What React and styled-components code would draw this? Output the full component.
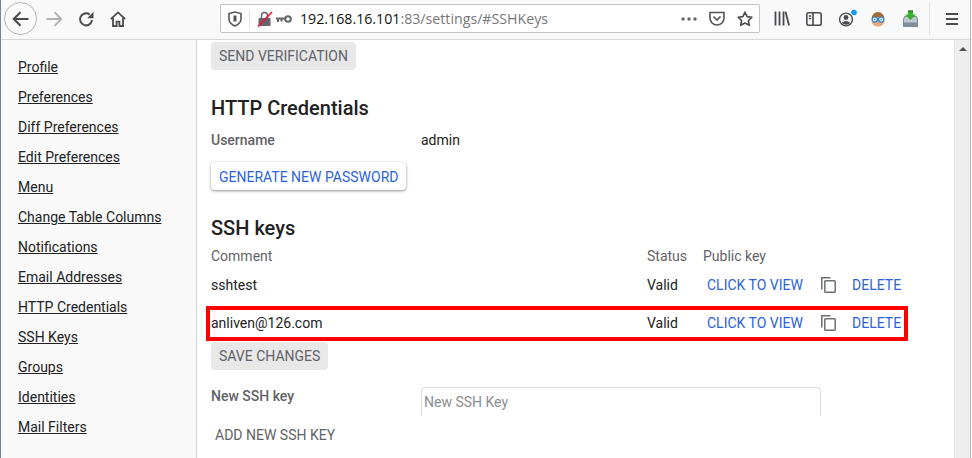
import React from "react";
import styled, { createGlobalStyle } from "styled-components";

const NAV_ITEMS = [
  "Profile",
  "Preferences",
  "Diff Preferences",
  "Edit Preferences",
  "Menu",
  "Change Table Columns",
  "Notifications",
  "Email Addresses",
  "HTTP Credentials",
  "SSH Keys",
  "Groups",
  "Identities",
  "Mail Filters",
];

const KEYS = [
  { comment: "sshtest", status: "Valid" },
  { comment: "anliven@126.com", status: "Valid", marked: true },
];

const GlobalStyle = createGlobalStyle`
  html, body {
    margin: 0;
    height: 458px;
    overflow: hidden;
    background: #fff;
    font-family: Roboto, sans-serif;
    font-size: 14px;
    color: #212121;
  }
`;

const Screen = styled.div`
  width: 972px;
  height: 458px;
  box-sizing: border-box;
  border-left: 1px solid #6f87a3;
  padding-right: 1px;
  overflow: hidden;
`;

const Window = styled.div`
  height: 100%;
  box-sizing: border-box;
  border-right: 1px solid #b4b4b4;
  display: flex;
  flex-direction: column;
`;

const Toolbar = styled.header`
  height: 39px;
  flex: none;
  display: flex;
  align-items: center;
  background: #f9f9fa;
  border-bottom: 1px solid #d8d8da;
  padding-left: 3px;
`;

const BackButton = styled.div`
  width: 33px;
  height: 33px;
  flex: none;
  margin-top: -2px;
  border: 1px solid #b4b4b6;
  border-radius: 50%;
  background: #fbfbfb;
  display: flex;
  align-items: center;
  justify-content: center;
  box-sizing: border-box;
  color: #4a4a4f;
`;

const ToolIcon = styled.div`
  width: ${(p) => p.$w || 32}px;
  height: 32px;
  margin-top: -2px;
  margin-left: ${(p) => p.$left || 0}px;
  display: flex;
  align-items: center;
  justify-content: center;
  flex: none;
  color: ${(p) => p.$color || "#4a4a4f"};
`;

const UrlBar = styled.div`
  width: 540px;
  height: 29px;
  margin-left: 85px;
  margin-top: -2px;
  flex: none;
  box-sizing: border-box;
  background: #fff;
  border: 1px solid #c4c4c6;
  border-radius: 2px;
  display: flex;
  align-items: center;
  padding-left: 3px;
`;

const UrlIcon = styled.div`
  width: ${(p) => p.$w}px;
  flex: none;
  display: flex;
  align-items: center;
  justify-content: center;
`;

const UrlDivider = styled.span`
  width: 1px;
  height: 18px;
  flex: none;
  background: #e3e3e5;
  margin: 0 7px 0 3px;
`;

const UrlText = styled.div`
  font-family: "Open Sans", "Liberation Sans", sans-serif;
  font-size: 14.2px;
  color: #111;
  margin-left: 5px;
  flex: 1;
  white-space: nowrap;
`;

const UrlMuted = styled.span`
  color: #77777b;
`;

const ToolSeparator = styled.span`
  width: 1px;
  height: 33px;
  flex: none;
  background: #e1e1e3;
  margin: -2px 15px 0 3px;
`;

const Page = styled.div`
  flex: 1;
  min-height: 0;
  display: flex;
`;

const Sidebar = styled.nav`
  width: 196px;
  flex: none;
  box-sizing: border-box;
  background: #f9f9fa;
  border-right: 1px solid #d4d4d4;
  padding: 12px 0 0 17px;
  display: flex;
  flex-direction: column;
`;

const NavLink = styled.a`
  height: 30px;
  line-height: 30px;
  font-size: 14px;
  color: #212121;
  text-decoration: underline;
`;

const Content = styled.main`
  flex: 1;
  min-width: 0;
  padding: 2px 0 0 14px;
  display: flex;
  flex-direction: column;
  align-items: flex-start;
`;

const Scrollbar = styled.div`
  width: 16px;
  flex: none;
  background: #eeeeee;
  border-left: 1px solid #e4e4e4;
  box-sizing: border-box;
  display: flex;
  justify-content: center;
  padding-top: 7px;
`;

const ScrollArrow = styled.span`
  width: 0;
  height: 0;
  border-left: 4px solid transparent;
  border-right: 4px solid transparent;
  border-bottom: 4px solid #505050;
`;

const GreyButton = styled.button`
  height: 28px;
  flex: none;
  padding: 0 8px;
  border: 0;
  border-radius: 4px;
  background: #e8e8e8;
  color: #5f6368;
  font-family: Roboto, sans-serif;
  font-size: 14px;
`;

const RaisedButton = styled.button`
  height: 28px;
  flex: none;
  padding: 1px 8px 0;
  border: 0;
  border-radius: 4px;
  background: #fff;
  color: #2b63dc;
  font-family: Roboto, sans-serif;
  font-size: 14px;
  box-shadow: 0 1px 3px rgba(0, 0, 0, 0.45);
`;

const FlatButton = styled.button`
  height: 28px;
  flex: none;
  margin-top: 5px;
  padding: 0 4px;
  border: 0;
  background: transparent;
  color: #5f6368;
  font-family: Roboto, sans-serif;
  font-size: 14px;
`;

const Heading = styled.h2`
  margin: 24px 0 0;
  font-size: 20px;
  font-weight: 500;
  line-height: 28px;
  color: #212121;
`;

const FieldRow = styled.div`
  display: flex;
  align-items: center;
  height: 20px;
  margin: 8px 0 12px;
`;

const FieldLabel = styled.div`
  width: 210px;
  flex: none;
  font-weight: 500;
  color: #5f6368;
`;

const KeyTable = styled.div`
  width: 690px;
  margin-top: 4px;
`;

const KeyGrid = styled.div`
  display: grid;
  grid-template-columns: 436px 56px 118px 31px auto;
  align-items: center;
  white-space: nowrap;
  box-sizing: border-box;
  height: ${(p) => p.$h}px;
`;

const MarkedRow = styled(KeyGrid)`
  position: relative;
  margin: 2px 0 1px;
  padding-bottom: 1px;

  &::after {
    content: "";
    position: absolute;
    left: -5px;
    top: 0;
    width: 702px;
    height: 35px;
    box-sizing: border-box;
    border: 4px solid #fe0000;
    pointer-events: none;
  }
`;

const HeaderCell = styled.div`
  color: #5f6368;
  grid-column: ${(p) => p.$span || "auto"};
`;

const ActionLink = styled.span`
  color: #2b63dc;
  padding-left: ${(p) => p.$pad || 0}px;
`;

const CopyWrap = styled.span`
  display: flex;
  color: #6b6e73;
`;

const NewKeyRow = styled.div`
  display: flex;
  align-items: flex-start;
  height: 29px;
  margin-top: 17px;
`;

const NewKeyLabel = styled(FieldLabel)`
  padding-top: 1px;
`;

const KeyInput = styled.div`
  width: 400px;
  height: 29px;
  box-sizing: border-box;
  border: 1px solid #dcdcdc;
  border-bottom: 0;
  border-radius: 4px 4px 0 0;
  padding: 6px 2px;
  color: #8a8d91;
  font-size: 14px;
`;

const BackIcon = () => (
  <svg width="17" height="16" viewBox="0 0 17 16" fill="none" stroke="currentColor" strokeWidth="2">
    <path d="M16.5 8H2M8.5 1.2L1.7 8l6.8 6.8" />
  </svg>
);

const ForwardIcon = () => (
  <svg width="17" height="16" viewBox="0 0 17 16" fill="none" stroke="currentColor" strokeWidth="1.8">
    <path d="M0.5 8H15M8.5 1.2L15.3 8l-6.8 6.8" />
  </svg>
);

const ReloadIcon = () => (
  <svg width="16" height="16" viewBox="0 0 16 16" fill="none" stroke="currentColor" strokeWidth="2">
    <path d="M14 9a6 6 0 1 1-2.3-5.4" />
    <path d="M15.5 0.8v6.4H9.2z" fill="currentColor" stroke="none" />
  </svg>
);

const HomeIcon = () => (
  <svg width="16" height="16" viewBox="0 0 16 16" fill="none" stroke="currentColor" strokeWidth="1.8">
    <path d="M0.8 8.2L8 1.4l7.2 6.8" />
    <path d="M3 7v8h3.6v-4.4h2.8V15H13V7" />
  </svg>
);

const ShieldIcon = () => (
  <svg width="14" height="16" viewBox="0 0 14 16" fill="none" stroke="#55555a" strokeWidth="1.6">
    <path d="M1 2.5L7 1l6 1.5V8c0 3.2-2.6 5.6-6 7-3.4-1.4-6-3.8-6-7z" />
    <path d="M7 4.5v6" strokeWidth="3" />
  </svg>
);

const LockIcon = () => (
  <svg width="16" height="16" viewBox="0 0 16 16" fill="none">
    <path d="M4.5 7V4.5a3 3 0 0 1 6 0V7" stroke="#66666a" strokeWidth="1.5" />
    <rect x="1.5" y="7" width="12" height="8" rx="1" fill="#66666a" />
    <path d="M1 15.5L15 1" stroke="#f0123c" strokeWidth="1.7" />
  </svg>
);

const KeyIcon = () => (
  <svg width="16" height="10" viewBox="0 0 16 10" fill="none" stroke="#66666a" strokeWidth="2">
    <circle cx="12" cy="5" r="2.8" />
    <path d="M9 4.4H0M2 4.4v3.6M5.5 4.4V7.6" />
  </svg>
);

const MoreIcon = () => (
  <svg width="16" height="4" viewBox="0 0 16 4" fill="#66666a">
    <circle cx="2" cy="2" r="1.7" />
    <circle cx="8" cy="2" r="1.7" />
    <circle cx="14" cy="2" r="1.7" />
  </svg>
);

const PocketIcon = () => (
  <svg width="16" height="15" viewBox="0 0 16 15" fill="none" stroke="#55555a" strokeWidth="1.6">
    <path d="M1 1.5h14V7a7 7 0 0 1-14 0z" />
    <path d="M4.5 5.5L8 9l3.5-3.5" />
  </svg>
);

const StarIcon = () => (
  <svg width="16" height="16" viewBox="0 0 16 16" fill="none" stroke="#4a4a4f" strokeWidth="1.6" strokeLinejoin="round">
    <path d="M8 1.2l2.1 4.4 4.8.6-3.5 3.3.9 4.8L8 12l-4.3 2.3.9-4.8L1.1 6.2l4.8-.6z" />
  </svg>
);

const LibraryIcon = () => (
  <svg width="16" height="15" viewBox="0 0 16 15" fill="none" stroke="currentColor" strokeWidth="1.8">
    <path d="M1.5 0.5v14M5.5 0.5v14M9.5 0.5v14M11.5 0.7l3.6 13.8" />
  </svg>
);

const SidebarIcon = () => (
  <svg width="16" height="14" viewBox="0 0 16 14" fill="none" stroke="currentColor" strokeWidth="1.6">
    <rect x="0.8" y="0.8" width="14.4" height="12.4" rx="2" />
    <path d="M7 1v12M2.8 4h2.4M2.8 6.5h2.4" />
  </svg>
);

const AccountIcon = () => (
  <svg width="20" height="18" viewBox="0 0 20 18" fill="none" overflow="visible">
    <circle cx="10" cy="9.5" r="6.4" stroke="#4a4a4f" strokeWidth="1.4" />
    <circle cx="10" cy="7.5" r="2.4" fill="#4a4a4f" />
    <path d="M5.8 13c1-2.2 7.4-2.2 8.4 0a6 6 0 0 1-8.4 0z" fill="#4a4a4f" />
    <circle cx="18" cy="2.5" r="2.8" fill="#0a9cf5" />
  </svg>
);

const AvatarIcon = () => (
  <svg width="16" height="16" viewBox="0 0 16 16">
    <ellipse cx="8" cy="10" rx="6.5" ry="5.5" fill="#eea878" />
    <path d="M1.5 8a6.5 7 0 0 1 13 0L12 6H4z" fill="#a56a36" />
    <circle cx="4.8" cy="8.6" r="2.6" fill="#e2effb" stroke="#2f80d0" strokeWidth="1.2" />
    <circle cx="11.2" cy="8.6" r="2.6" fill="#e2effb" stroke="#2f80d0" strokeWidth="1.2" />
    <circle cx="4.8" cy="8.6" r="0.8" fill="#5a8fd0" />
    <circle cx="11.2" cy="8.6" r="0.8" fill="#5a8fd0" />
  </svg>
);

const SaveIcon = () => (
  <svg width="15" height="17" viewBox="0 0 15 17">
    <path d="M1.5 6h12l1.5 3v8H0V9z" fill="#7f8e98" />
    <path d="M2 7h11l1 2.5v3H1v-3z" fill="#bcc8cf" />
    <path d="M5 0.5h5v4h3L7.5 10 2 4.5h3z" fill="#35b02a" />
    <path d="M5 0.5h5v1.5H5z" fill="#1f8a1c" />
  </svg>
);

const MenuIcon = () => (
  <svg width="14" height="12" viewBox="0 0 14 12" fill="none" stroke="currentColor" strokeWidth="1.8">
    <path d="M1 1h12M1 6h12M1 11h12" />
  </svg>
);

const CopyIcon = () => (
  <svg width="15" height="16" viewBox="0 0 15 16" fill="none" stroke="currentColor" strokeWidth="1.5">
    <path d="M0.8 12.5V0.8h8.7" />
    <rect x="3.8" y="3.8" width="10.4" height="11.4" rx="0.8" />
  </svg>
);

function App() {
  return (
    <Screen>
      <GlobalStyle />
      <Window>
        <Toolbar>
          <BackButton>
            <BackIcon />
          </BackButton>
          <ToolIcon $w={34} $color="#b1b1b3">
            <ForwardIcon />
          </ToolIcon>
          <ToolIcon $w={30}>
            <ReloadIcon />
          </ToolIcon>
          <ToolIcon $w={34}>
            <HomeIcon />
          </ToolIcon>
          <UrlBar>
            <UrlIcon $w={22}>
              <ShieldIcon />
            </UrlIcon>
            <UrlDivider />
            <LockIcon />
            <UrlIcon $w={22}>
              <KeyIcon />
            </UrlIcon>
            <UrlText>
              192.168.16.101<UrlMuted>:83/settings/#SSHKeys</UrlMuted>
            </UrlText>
            <MoreIcon />
            <UrlIcon $w={40}>
              <PocketIcon />
            </UrlIcon>
            <StarIcon />
            <UrlIcon $w={6} />
          </UrlBar>
          <ToolIcon $left={6}>
            <LibraryIcon />
          </ToolIcon>
          <ToolIcon>
            <SidebarIcon />
          </ToolIcon>
          <ToolIcon>
            <AccountIcon />
          </ToolIcon>
          <ToolIcon>
            <AvatarIcon />
          </ToolIcon>
          <ToolIcon>
            <SaveIcon />
          </ToolIcon>
          <ToolSeparator />
          <ToolIcon $w={14}>
            <MenuIcon />
          </ToolIcon>
        </Toolbar>
        <Page>
          <Sidebar>
            {NAV_ITEMS.map((item) => (
              <NavLink key={item}>{item}</NavLink>
            ))}
          </Sidebar>
          <Content>
            <GreyButton>SEND VERIFICATION</GreyButton>
            <Heading>HTTP Credentials</Heading>
            <FieldRow>
              <FieldLabel>Username</FieldLabel>
              <span>admin</span>
            </FieldRow>
            <RaisedButton>GENERATE NEW PASSWORD</RaisedButton>
            <Heading>SSH keys</Heading>
            <KeyTable>
              <KeyGrid $h={20}>
                <HeaderCell>Comment</HeaderCell>
                <HeaderCell>Status</HeaderCell>
                <HeaderCell $span="3 / 6">Public key</HeaderCell>
              </KeyGrid>
              {KEYS.map((key) => {
                const Row = key.marked ? MarkedRow : KeyGrid;
                return (
                  <Row key={key.comment} $h={key.marked ? 35 : 38}>
                    <span>{key.comment}</span>
                    <span>{key.status}</span>
                    <ActionLink $pad={4}>CLICK TO VIEW</ActionLink>
                    <CopyWrap>
                      <CopyIcon />
                    </CopyWrap>
                    <ActionLink>DELETE</ActionLink>
                  </Row>
                );
              })}
            </KeyTable>
            <GreyButton>SAVE CHANGES</GreyButton>
            <NewKeyRow>
              <NewKeyLabel>New SSH key</NewKeyLabel>
              <KeyInput>New SSH Key</KeyInput>
            </NewKeyRow>
            <FlatButton>ADD NEW SSH KEY</FlatButton>
          </Content>
          <Scrollbar>
            <ScrollArrow />
          </Scrollbar>
        </Page>
      </Window>
    </Screen>
  );
}

export default App;
